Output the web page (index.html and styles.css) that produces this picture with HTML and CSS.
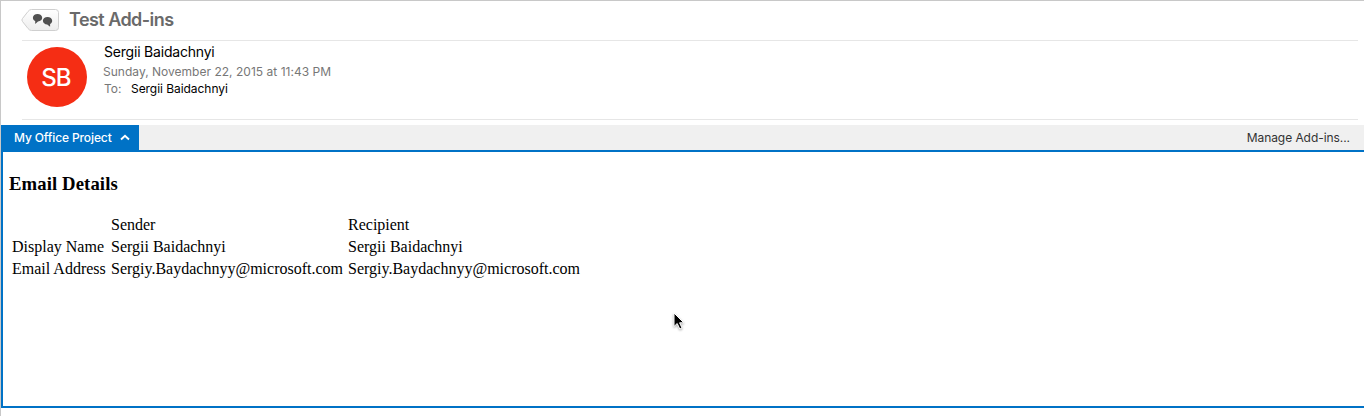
FILE: index.html
```html
<!DOCTYPE html>
<html lang="en">
<head>
<meta charset="utf-8">
<title>Test Add-ins</title>
<link rel="stylesheet" href="styles.css">
</head>
<body>
<div class="window">
  <header class="subject">
    <svg class="tag" width="40" height="24" viewBox="0 0 40 24">
      <defs><linearGradient id="g" x1="0" y1="0" x2="0" y2="1"><stop offset="0" stop-color="#fff"/><stop offset="1" stop-color="#ededed"/></linearGradient></defs>
      <path d="M10.5 1.5H34.5Q37.5 1.5 37.5 4.500V19.500Q37.500 22.500 34.500 22.500H10.500Q8.500 22.500 7 20.500L1.500 13.500Q.2 12 1.500 10.500L7 3.500Q8.500 1.500 10.500 1.500Z" fill="url(#g)" stroke="#cfcfcf"/>
      <path d="M16.500 6C19.200 6 21.200 7.600 21.200 9.700S19.500 13.100 17 13.400L14.200 16V13C12.700 12.300 11.900 11.100 11.900 9.700C11.900 7.600 13.900 6 16.500 6Z" fill="#505050"/>
      <path d="M26.500 9C29.200 9 31.200 10.700 31.200 12.800C31.200 14.200 30.300 15.400 29.100 16V18.800L26.200 16.600C23.700 16.400 21.900 14.800 21.900 12.800C21.900 10.700 23.900 9 26.500 9Z" fill="#505050"/>
    </svg>
    <h1 class="title">Test Add-ins</h1>
  </header>
  <section class="message">
    <div class="avatar">SB</div>
    <div class="meta">
      <div class="from">Sergii Baidachnyi</div>
      <div class="date">Sunday, November 22, 2015 at 11:43 PM</div>
      <div class="to"><span class="label">To:</span><span class="name">Sergii Baidachnyi</span></div>
    </div>
  </section>
  <nav class="addins">
    <div class="tab"><span class="tab-name">My Office Project</span>
      <svg class="chevron" width="10" height="7" viewBox="0 0 10 7"><path d="M1 5.500L5 1.700L9 5.500" fill="none" stroke="#fff" stroke-width="1.900"/></svg>
    </div>
    <div class="manage">Manage Add-ins...</div>
  </nav>
  <main class="panel">
    <h2 class="heading">Email Details</h2>
    <table class="details">
      <tr><td class="key"></td><td class="value">Sender</td><td>Recipient</td></tr>
      <tr><td>Display Name</td><td>Sergii Baidachnyi</td><td>Sergii Baidachnyi</td></tr>
      <tr><td>Email Address</td><td>Sergiy.Baydachnyy@microsoft.com</td><td>Sergiy.Baydachnyy@microsoft.com</td></tr>
    </table>
  </main>
</div>
<svg class="cursor" width="16" height="22" viewBox="0 0 16 22"><path d="M2 2V15.500L5.200 12.500L7.800 18L10 17L7.600 11.800H11.800Z" fill="#000" stroke="#fff" stroke-width="1"/></svg>
</body>
</html>
```
FILE: styles.css
```css
* { box-sizing: border-box; }
body { margin: 0; background: #fff; font-family: Inter, sans-serif; overflow: hidden; }
.window { height: 416px; border-top: 1px solid #c8c8c8; border-left: 1px solid #c8c8c8; }
.subject { height: 40px; margin: 0 6px 0 21px; border-bottom: 1px solid #e6e6e6; display: flex; align-items: flex-start; padding-top: 7px; }
.tag { flex: none; margin-left: -1px; }
.title { margin: 0 0 0 8px; font-size: 18px; line-height: 24px; font-weight: 600; letter-spacing: -0.55px; color: #6a6a6a; }
.message { height: 79px; margin: 0 6px 0 21px; border-bottom: 1px solid #e6e6e6; display: flex; padding-top: 6px; }
.avatar { width: 60px; height: 60px; margin-left: 5px; border-radius: 50%; background: #f52d14; color: #fff; display: flex; align-items: center; justify-content: center; font-size: 24px; font-weight: 500; letter-spacing: -1px; padding-right: 2px; }
.meta { margin-left: 17px; margin-top: -5px; white-space: nowrap; }
.from { font-size: 14px; line-height: 20px; letter-spacing: -0.2px; color: #000; }
.date { margin-left: -1px; font-size: 12px; line-height: 20px; letter-spacing: 0.02px; color: #777; }
.to { font-size: 12px; line-height: 14px; color: #777; display: flex; }
.label { width: 27px; }
.name { color: #000; letter-spacing: -0.05px; }
.addins { margin-top: 5px; height: 27px; background: #f0f0f0; border-bottom: 2px solid #0072c6; display: flex; justify-content: space-between; font-size: 12px; line-height: 25px; }
.tab { width: 138px; background: #0072c6; color: #fff; font-weight: 500; padding-left: 13px; display: flex; align-items: center; letter-spacing: -0.12px; }
.tab-name { width: 106px; }
.manage { padding-right: 14px; color: #333; letter-spacing: -0.06px; }
.panel { height: 256px; border-left: 2px solid #0072c6; border-bottom: 2px solid #0072c6; padding: 21px 6px; font-family: "Liberation Serif", serif; color: #000; }
.heading { margin: 0; font-size: 18.72px; line-height: 22px; letter-spacing: 0.1px; }
.details { margin-top: 18px; border-spacing: 2px; font-size: 16px; line-height: 18px; }
.details td { padding: 1px; white-space: nowrap; }
.details .key { width: 97px; }
.details .value { width: 235px; }
.cursor { position: absolute; left: 672px; top: 311px; filter: drop-shadow(0 1px 1px rgba(0,0,0,.35)); }
```
